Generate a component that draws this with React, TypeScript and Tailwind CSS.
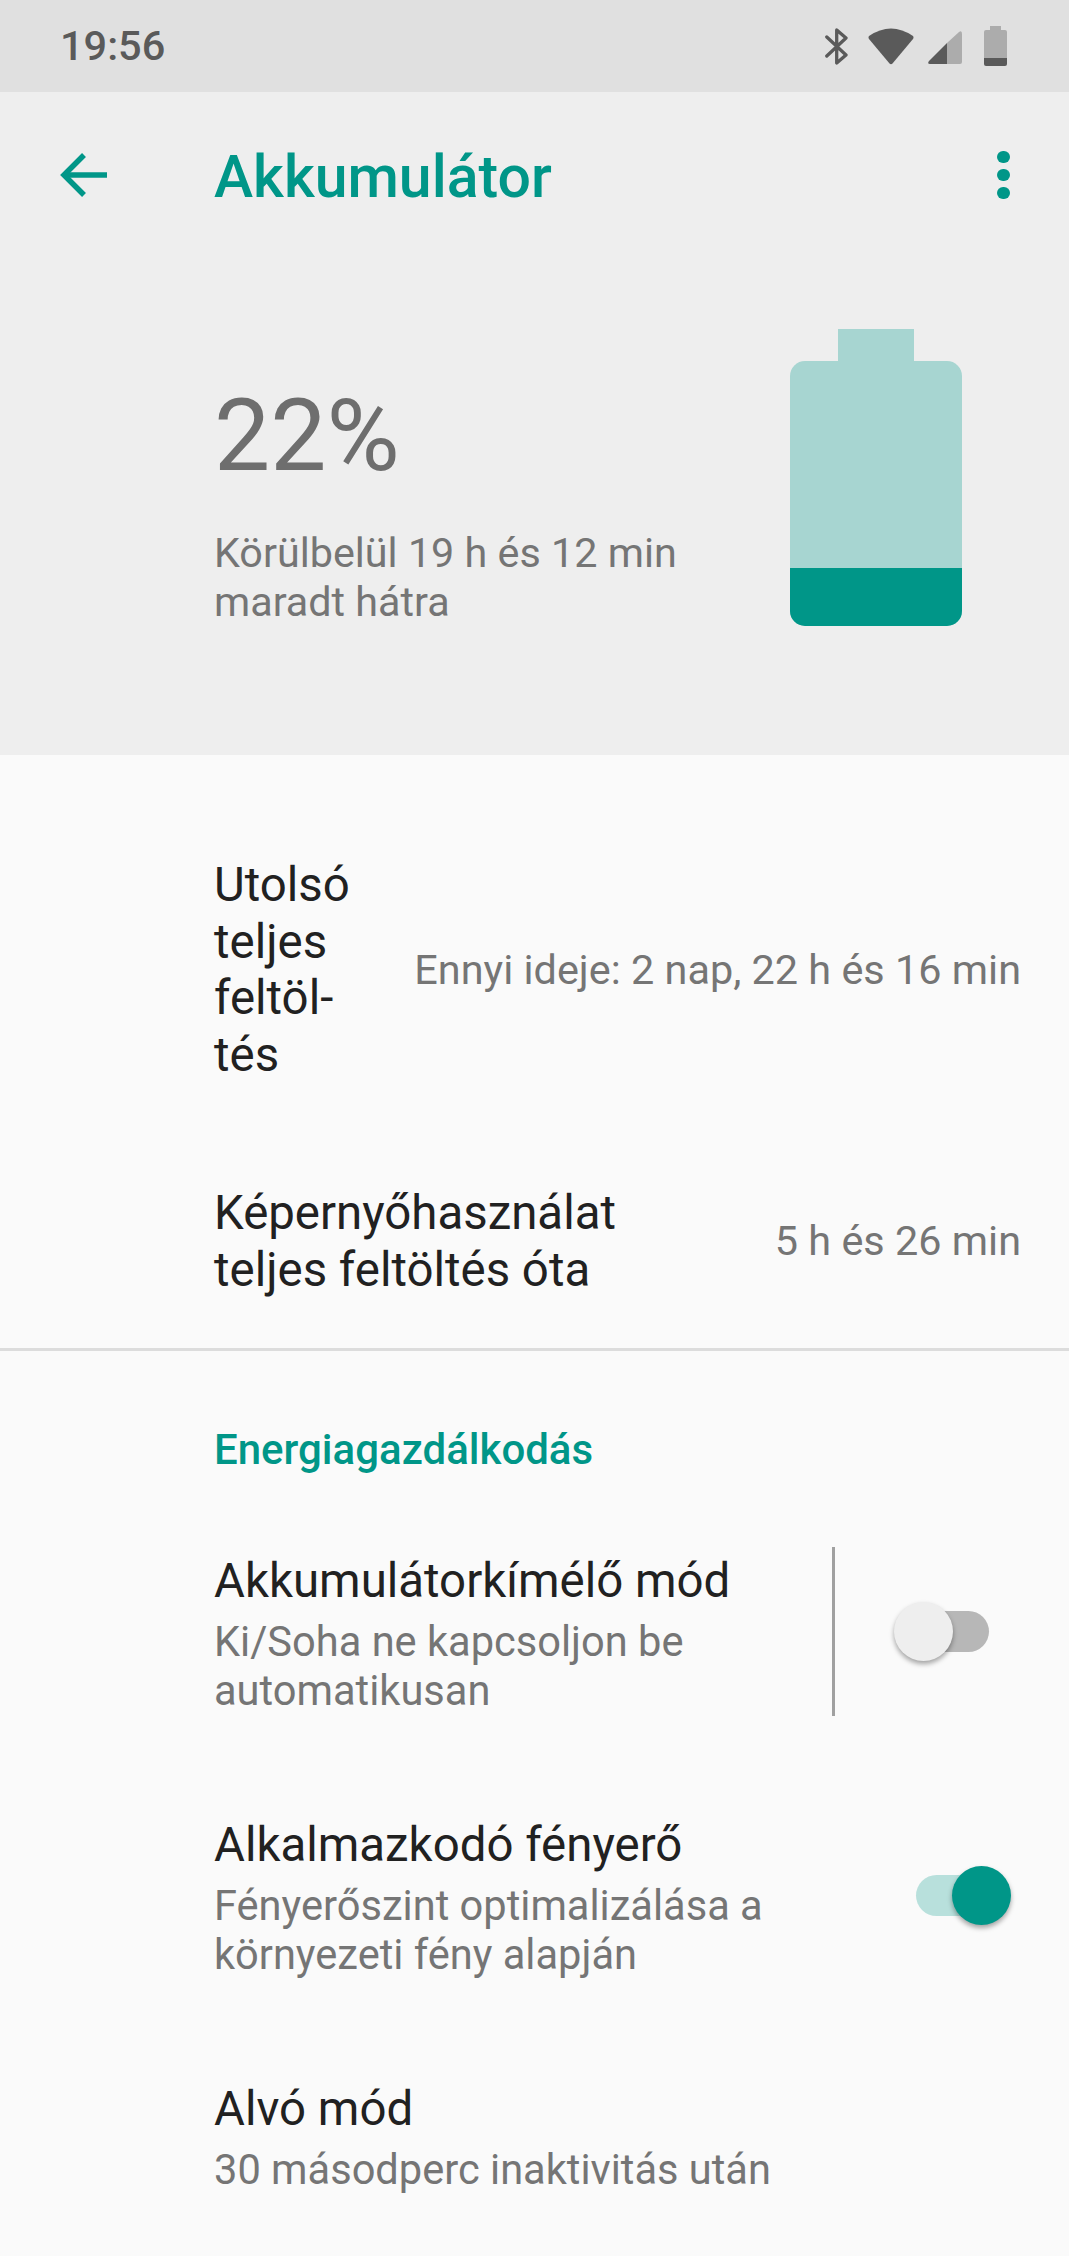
import React from "react";

const Sw = ({ on }: { on: boolean }) => (
  <div className="relative w-[95px] h-[59px] flex items-center">
    <div className={on ? "w-[71px] h-[41px] rounded-full bg-[#b8e0dc]" : "ml-[24px] w-[71px] h-[41px] rounded-full bg-[#b7b7b7]"} />
    <div className={on ? "absolute right-0 top-0 w-[59px] h-[59px] rounded-full bg-[#009688] shadow-[0_3px_5px_rgba(0,0,0,0.35)]" : "absolute left-0 top-0 w-[59px] h-[59px] rounded-full bg-[#eeeeee] shadow-[0_3px_5px_rgba(0,0,0,0.35)]"} />
  </div>
);

export default function App() {
  return (
    <div className="w-[1069px] h-[2256px] overflow-hidden bg-[#fafafa] font-['Roboto',sans-serif] text-[#212121]">
      <div className="h-[92px] bg-[#e0e0e0] flex items-center justify-between pl-[60px] pr-[62px]">
        <span className="text-[41.5px] font-medium text-[#5a5a5a]">19:56</span>
        <div className="flex items-center">
          <svg width="23" height="37" viewBox="0 0 23 37" className="mr-[20px]" fill="none" stroke="#5a5a5a" strokeWidth="3.3" strokeLinecap="round" strokeLinejoin="round">
            <path d="M1.8 9 L21 27 L11.7 35 V2 L21 10 L1.8 28" />
          </svg>
          <svg width="46" height="37" viewBox="0 0 46 37" className="mr-[14px]">
            <path d="M1 8 Q23 -7 45 8 Q46 9.5 45 11 L24.5 35.5 Q23 37 21.5 35.5 L1 11 Q0 9.5 1 8 Z" fill="#5a5a5a" />
          </svg>
          <svg width="34" height="33" viewBox="0 0 34 33" className="mr-[22px] mt-[3px]">
            <path d="M31 1 Q34 -1 34 3 V31 Q34 33 32 33 H19 V12 Z" fill="#acacac" />
            <path d="M19 12 V33 H2 Q-1 33 1 30 Z" fill="#5a5a5a" />
          </svg>
          <svg width="23" height="40" viewBox="0 0 23 40">
            <path d="M6 0 H17 V4 H21 Q23 4 23 6 V32 H0 V6 Q0 4 2 4 H6 Z" fill="#acacac" />
            <path d="M0 32 H23 V38 Q23 40 21 40 H2 Q0 40 0 38 Z" fill="#5a5a5a" />
          </svg>
        </div>
      </div>

      <div className="h-[663px] bg-[#eeeeee]">
        <div className="h-[168px] relative flex items-center pl-[214px]">
          <svg width="48" height="48" viewBox="0 0 48 48" className="absolute left-[59px] top-[59px]" fill="none" stroke="#009688" strokeWidth="5.5">
            <path d="M49 24 H6" />
            <path d="M25 4 L5 24 L25 44" />
          </svg>
          <span className="text-[59px] font-medium text-[#009688] leading-none">Akkumulátor</span>
          <div className="absolute left-[997px] top-[59px] flex flex-col gap-[6px]">
            <div className="w-[13px] h-[12px] rounded-full bg-[#009688]" />
            <div className="w-[13px] h-[12px] rounded-full bg-[#009688]" />
            <div className="w-[13px] h-[12px] rounded-full bg-[#009688]" />
          </div>
        </div>
        <div className="flex justify-between pl-[214px] pr-[107px]">
          <div>
            <div className="mt-[120px] text-[100px] leading-[112px] font-normal text-[#6e6e6e]">22%</div>
            <div className="mt-[37px] text-[41.3px] leading-[49px] text-[#757575]">Körülbelül 19 h és 12 min<br />maradt hátra</div>
          </div>
          <div className="w-[172px] mt-[69px]">
            <div className="mx-auto w-[76px] h-[32px] bg-[#a7d5d1]" />
            <div className="h-[265px] rounded-[15px] overflow-hidden bg-[#a7d5d1] flex flex-col justify-end">
              <div className="h-[58px] bg-[#009688]" />
            </div>
          </div>
        </div>
      </div>

      <div className="pl-[214px] pr-[48px]">
        <div className="h-[330px] flex items-center justify-between mt-[50px]">
          <div className="text-[47.4px] leading-[56.5px] w-[160px]">Utolsó<br />teljes<br />feltöl-<br />tés</div>
          <div className="text-[41.4px] text-[#757575]">Ennyi ideje: 2 nap, 22 h és 16 min</div>
        </div>
        <div className="h-[213px] flex items-center justify-between">
          <div className="text-[47.4px] leading-[56.5px]">Képernyőhasználat<br />teljes feltöltés óta</div>
          <div className="text-[41.4px] text-[#757575]">5 h és 26 min</div>
        </div>
      </div>
      <div className="h-[3px] bg-[#dcdcdc]" />

      <div className="pl-[214px] mt-[77px] text-[42px] leading-[44px] font-medium text-[#009688]">Energiagazdálkodás</div>

      <div className="mt-[75px] pl-[214px] flex items-center h-[169px]">
        <div className="w-[618px]">
          <div className="text-[47.4px] leading-[65px]">Akkumulátorkímélő mód</div>
          <div className="mt-[3px] text-[41.6px] leading-[49px] text-[#757575]">Ki/Soha ne kapcsoljon be<br />automatikusan</div>
        </div>
        <div className="w-[3px] h-[169px] bg-[#a0a0a0]" />
        <div className="ml-[59px]"><Sw on={false} /></div>
      </div>

      <div className="mt-[95px] pl-[214px] flex items-center h-[169px]">
        <div className="w-[702px]">
          <div className="text-[47.4px] leading-[65px]">Alkalmazkodó fényerő</div>
          <div className="mt-[3px] text-[41.6px] leading-[49px] text-[#757575]">Fényerőszint optimalizálása a<br />környezeti fény alapján</div>
        </div>
        <Sw on={true} />
      </div>

      <div className="mt-[96px] pl-[214px]">
        <div className="text-[47.4px] leading-[66px]">Alvó mód</div>
        <div className="mt-[3px] text-[41.6px] leading-[49px] text-[#757575]">30 másodperc inaktivitás után</div>
      </div>
    </div>
  );
}
